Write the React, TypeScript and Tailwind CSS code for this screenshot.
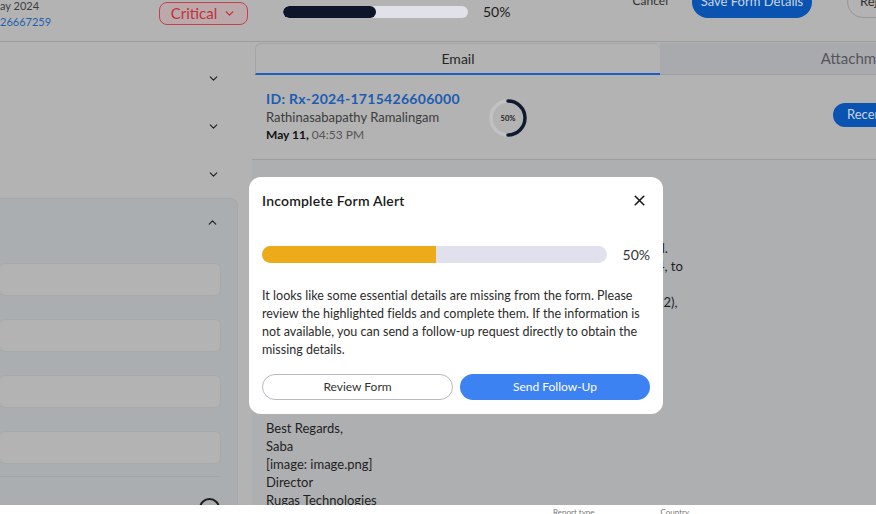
import { ChevronDown, ChevronUp, X } from 'lucide-react'

const bodyLines = [
  'Hi Team,',
  '',
  'Please find the attached report for the case mentioned below.',
  'We have received a report of an adverse event from a patient by email.',
  'The patient was prescribed this medications from 12th of March 2024, to',
  'manage the symptoms reported earlier.',
  'Batch number: BN-0092, Expiry date: 31/12/2025 (Mfg date: 01/2022),',
  'Event: mild rash and dizziness.',
  '',
  '',
  '',
  '',
  '',
  'Best Regards,',
  'Saba',
  '[image: image.png]',
  'Director',
  'Rugas Technologies',
]

const alertLines = [
  'It looks like some essential details are missing from the form. Please',
  'review the highlighted fields and complete them. If the information is',
  'not available, you can send a follow-up request directly to obtain the',
  'missing details.',
]

function RingProgress() {
  return (
    <svg width="40" height="40" viewBox="0 0 40 40" className="shrink-0">
      <circle cx="20" cy="20" r="17" fill="none" stroke="#c2c2c4" strokeWidth="3.5" />
      <path d="M20 3 A17 17 0 0 1 20 37" fill="none" stroke="#0f1a2e" strokeWidth="3.5" strokeLinecap="round" />
      <text x="20" y="22.5" textAnchor="middle" fontSize="7.5" fontWeight="700" fill="#1e1e1e" fontFamily="Lato, sans-serif">
        50%
      </text>
    </svg>
  )
}

export default function App() {
  return (
    <div className="relative w-[876px] h-[514px] overflow-hidden bg-white font-['Lato',sans-serif]">
      <div className="h-[505px] flex flex-col bg-[#b3b3b3] overflow-hidden">
        {/* Top bar */}
        <div className="h-[42px] shrink-0 border-b border-[#9c9c9c] flex items-start">
          <div className="w-[150px] shrink-0">
            <div className="text-[11px] leading-[14px] mt-[-1px] text-[#3d3d3d]">ay 2024</div>
            <div className="text-[11px] leading-[14px] mt-[2px] text-[#1f5fb0]">26667259</div>
          </div>
          <div className="ml-[9px] mt-[2px] h-[23px] w-[89px] rounded-[8px] border border-[#c5414b] bg-[#bba9ab] flex items-center justify-center gap-[6px] text-[#c4313c]">
            <span className="text-[15px] leading-none">Critical</span>
            <ChevronDown size={13} strokeWidth={2.4} />
          </div>
          <div className="ml-[35px] mt-[6px] h-[12px] w-[185px] rounded-full bg-[#e1e1ea] overflow-hidden">
            <div className="h-full w-[93px] rounded-full bg-[#0c1529]" />
          </div>
          <div className="ml-[15px] mt-[3px] text-[14px] leading-[18px] text-[#1c1c1c]">50%</div>
          <div className="ml-auto flex items-start">
            <div className="mt-[-7px] text-[12px] leading-[16px] text-[#2f2f2f]">Cancel</div>
            <div className="ml-[24px] mt-[-14px] h-[32px] w-[120px] rounded-full bg-[#0a53b0] flex items-center justify-center text-[13px] text-[#c9d5e6]">
              Save Form Details
            </div>
            <div className="ml-[35px] mt-[-14px] h-[32px] w-[60px] mr-[-31px] rounded-full border border-[#979797] flex items-center pl-[12px] text-[13px] text-[#2f2f2f]">
              Reject
            </div>
          </div>
        </div>

        <div className="flex flex-1 min-h-0">
          {/* Left column */}
          <div className="w-[252px] shrink-0 pt-[12px] flex flex-col">
            {[0, 1, 2].map((i) => (
              <div key={i} className="h-[48px] shrink-0 w-[238px] flex items-center justify-end pr-[18px] text-[#222]">
                <ChevronDown size={13} strokeWidth={2.2} />
              </div>
            ))}
            <div className="w-[238px] flex-1 shrink-0 rounded-tr-[8px] border border-l-0 border-[#a6a9ac] bg-[#abaeb1] pr-[16px] flex flex-col">
              <div className="h-[46px] shrink-0 flex items-center justify-end pr-[2px] text-[#222]">
                <ChevronUp size={13} strokeWidth={2.2} />
              </div>
              <div className="mt-[18px] flex flex-col gap-[23px]">
                {[0, 1, 2, 3].map((i) => (
                  <div key={i} className="h-[33px] shrink-0 rounded-[6px] border border-l-0 border-[#a7aaad] bg-[#b3b3b3]" />
                ))}
              </div>
              <div className="mt-[12px] h-px shrink-0 bg-[#a3a6a9]" />
              <div className="mt-[21px] flex justify-end pr-[1px]">
                <div className="w-[21px] h-[21px] shrink-0 rounded-full border-2 border-[#1e1e1e]" />
              </div>
            </div>
          </div>

          {/* Right column */}
          <div className="w-[820px] shrink-0 flex flex-col">
            <div className="mt-[1px] ml-[3px] h-[32px] flex shrink-0">
              <div className="w-[405px] rounded-t-[6px] border-l border-t border-[#a5a5a5] border-b-2 border-b-[#1b5fc4] bg-[#b3b3b3] flex items-center justify-center text-[14px] text-[#262626]">
                Email
              </div>
              <div className="w-[405px] bg-[#a9aaae] border-b border-[#a1a1a4] flex items-center justify-center text-[15px] text-[#55565a]">
                Attachments
              </div>
            </div>
            <div className="h-px bg-[#9f9f9f] mt-[1px]" />
            <div className="h-[84px] shrink-0 border-b border-[#9e9e9e] flex items-center pl-[14px]">
              <div className="w-[222px] mt-[-1px]">
                <div className="text-[14px] leading-[18px] font-bold tracking-[0.3px] text-[#1b5cb2]">ID: Rx-2024-1715426606000</div>
                <div className="text-[13px] leading-[18px] text-[#3c3c3c]">Rathinasabapathy Ramalingam</div>
                <div className="text-[12px] leading-[18px] text-[#555]">
                  <span className="font-bold text-[#111]">May 11,</span> 04:53 PM
                </div>
              </div>
              <RingProgress />
              <div className="ml-[305px] mt-[-6px] h-[24px] w-[90px] rounded-full bg-[#0a53b0] flex items-center pl-[14px] text-[13px] text-[#c9d5e6]">
                Recent
              </div>
            </div>
            <div className="flex-1 bg-[#aeafb1] pl-[14px] pt-[25px]">
              {bodyLines.map((line, i) => (
                <div key={i} className="h-[18px] leading-[18px] text-[13px] text-[#1e1e1e] whitespace-nowrap">
                  {line}
                </div>
              ))}
            </div>
          </div>
        </div>
      </div>

      {/* Strip below the backdrop */}
      <div className="h-[9px] flex text-[8px] leading-[10px] text-[#777] pt-[2px]">
        <span className="ml-[553px]">Report type</span>
        <span className="ml-[66px]">Country</span>
      </div>

      {/* Modal */}
      <div className="absolute left-[249px] top-[177px] w-[414px] h-[237px] rounded-[12px] bg-white px-[13px] pt-[13px] pb-[14px] flex flex-col">
        <div className="h-[20px] flex items-center justify-between">
          <div className="text-[14px] font-semibold tracking-[0.2px] text-[#1a1a1a]">Incomplete Form Alert</div>
          <X size={17} strokeWidth={2.2} className="text-[#1a1a1a] mr-[2px]" />
        </div>
        <div className="mt-[34px] flex items-center">
          <div className="h-[17px] w-[348px] rounded-full bg-[#e1e1ee] overflow-hidden">
            <div className="h-full w-[174px] bg-[#edab19]" />
          </div>
          <div className="ml-[16px] text-[14px] text-[#333]">50%</div>
        </div>
        <p className="mt-[22px] text-[12.5px] leading-[18px] tracking-[0.02px] text-[#2b2b2b] whitespace-nowrap">
          {alertLines.map((line, i) => (
            <span key={i} className="block">
              {line}
            </span>
          ))}
        </p>
        <div className="mt-[15px] flex gap-[7px]">
          <button className="h-[26px] w-[191px] rounded-full border border-[#b9b9c2] text-[12px] text-[#333]">Review Form</button>
          <button className="h-[26px] w-[190px] rounded-full bg-[#3d82f3] text-[12px] text-white">Send Follow-Up</button>
        </div>
      </div>
    </div>
  )
}
